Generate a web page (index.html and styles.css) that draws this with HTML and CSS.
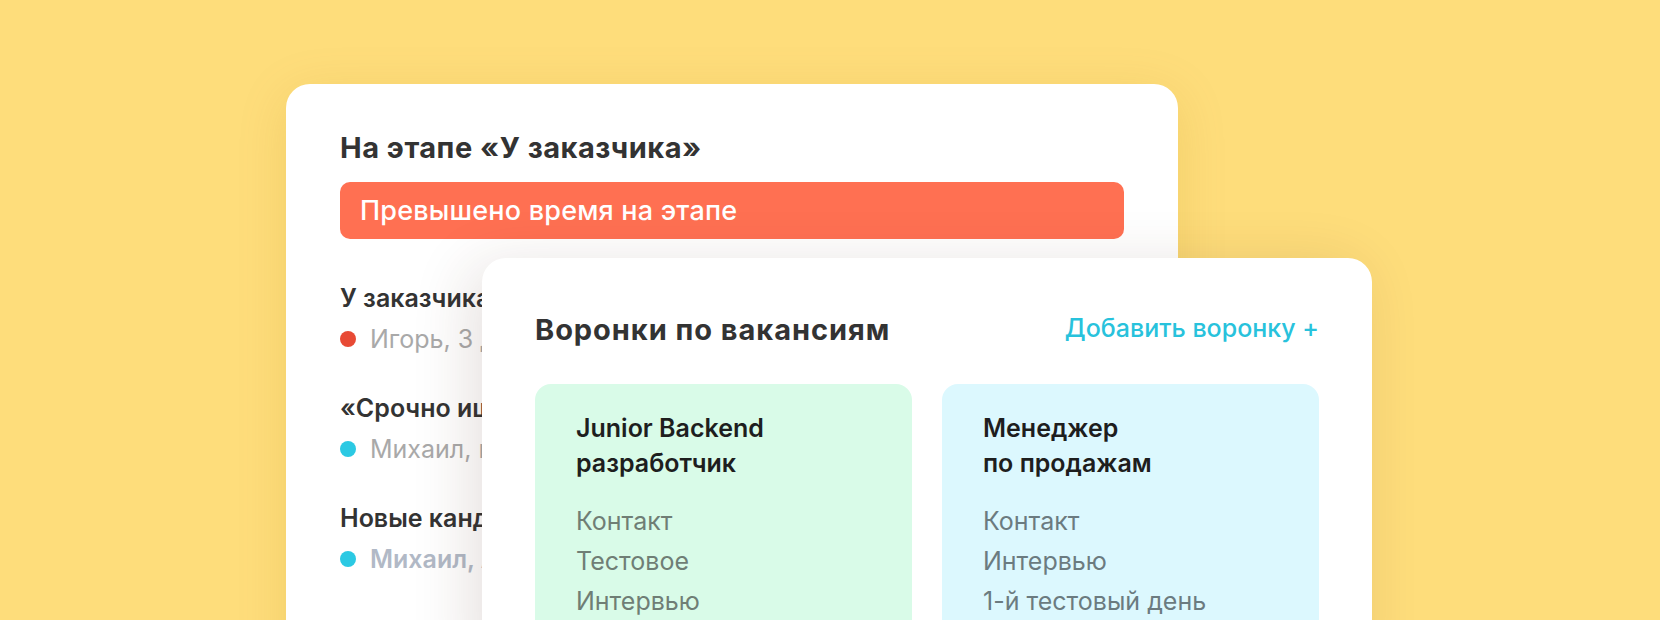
FILE: index.html
```html
<!DOCTYPE html>
<html lang="ru">
<head>
<meta charset="utf-8">
<title>Воронки</title>
<link rel="stylesheet" href="styles.css">
</head>
<body>
<div class="stage">
  <section class="card card-back">
    <h2 class="back-title">На этапе «У заказчика»</h2>
    <div class="alert">Превышено время на этапе</div>
    <ul class="events">
      <li class="event">
        <div class="event-title">У заказчика 3 дня</div>
        <div class="event-sub"><span class="dot dot-red"></span><span class="sub-text">Игорь, 3 дня на этапе</span></div>
      </li>
      <li class="event">
        <div class="event-title">«Срочно ищем аналитика»</div>
        <div class="event-sub"><span class="dot dot-cyan"></span><span class="sub-text">Михаил, новое сообщение</span></div>
      </li>
      <li class="event">
        <div class="event-title">Новые кандидаты</div>
        <div class="event-sub"><span class="dot dot-cyan"></span><span class="sub-text sub-strong">Михаил, Анна</span></div>
      </li>
    </ul>
  </section>
  <section class="card card-front">
    <div class="front-head">
      <h2 class="front-title">Воронки по вакансиям</h2>
      <a class="add-link" href="#">Добавить воронку +</a>
    </div>
    <div class="funnels">
      <div class="funnel funnel-green">
        <div class="funnel-name">Junior Backend<br>разработчик</div>
        <ul class="stages">
          <li>Контакт</li>
          <li>Тестовое</li>
          <li>Интервью</li>
        </ul>
      </div>
      <div class="funnel funnel-blue">
        <div class="funnel-name">Менеджер<br>по продажам</div>
        <ul class="stages">
          <li>Контакт</li>
          <li>Интервью</li>
          <li>1-й тестовый день</li>
        </ul>
      </div>
    </div>
  </section>
</div>
</body>
</html>
```

FILE: styles.css
```css
html, body {
  margin: 0;
  padding: 0;
}
body {
  width: 1660px;
  height: 620px;
  overflow: hidden;
  background: #fedd7b;
  font-family: Inter, "Noto Sans", sans-serif;
  color: #333333;
}
.stage {
  display: grid;
  grid-template-columns: 196px 696px 194px;
  grid-template-rows: 174px 420px;
  margin-left: 286px;
  padding-top: 84px;
}
.card {
  background: #ffffff;
  border-radius: 24px;
  box-sizing: border-box;
}
.card-back {
  grid-column: 1 / 3;
  grid-row: 1 / 3;
  padding: 47px 54px 0 54px;
  box-shadow: 0 10px 50px rgba(170, 120, 0, 0.15);
  overflow: hidden;
}
.card-front {
  grid-column: 2 / 4;
  grid-row: 2 / 3;
  padding: 56px 53px 0 53px;
  box-shadow: -12px 8px 60px rgba(80, 40, 30, 0.14);
  position: relative;
  z-index: 1;
  overflow: hidden;
}
.back-title {
  margin: 0;
  font-size: 29px;
  line-height: 34px;
  font-weight: 700;
  color: #333333;
  letter-spacing: 0.5px;
}
.alert {
  margin-top: 17px;
  height: 57px;
  box-sizing: border-box;
  background: #ff7052;
  border-radius: 10px;
  color: #ffffff;
  font-size: 27px;
  font-weight: 500;
  line-height: 57px;
  padding-left: 20px;
  letter-spacing: 0.2px;
}
.events {
  list-style: none;
  margin: 43px 0 0 0;
  padding: 0;
  display: flex;
  flex-direction: column;
  gap: 37px;
}
.event {
  display: flex;
  flex-direction: column;
  gap: 9px;
  white-space: nowrap;
}
.event-title {
  font-size: 25px;
  line-height: 32px;
  font-weight: 600;
  color: #333333;
}
.event-sub {
  display: flex;
  align-items: center;
  gap: 14px;
  font-size: 25px;
  line-height: 32px;
  color: #a9a9a9;
}
.dot {
  width: 16px;
  height: 16px;
  border-radius: 50%;
  flex: none;
}
.dot-red { background: #e84a35; }
.dot-cyan { background: #2bc9e3; }
.sub-strong {
  font-weight: 600;
  color: #b1b9c6;
}
.front-head {
  display: flex;
  justify-content: space-between;
  align-items: flex-start;
}
.front-title {
  margin: 0;
  font-size: 29px;
  line-height: 32px;
  font-weight: 700;
  color: #333333;
  letter-spacing: 0.95px;
}
.add-link {
  font-size: 25px;
  line-height: 29px;
  font-weight: 500;
  color: #28c2dc;
  text-decoration: none;
}
.funnels {
  margin-top: 38px;
  display: grid;
  grid-template-columns: 1fr 1fr;
  gap: 30px;
}
.funnel {
  border-radius: 16px;
  padding: 27px 40px 0 41px;
  height: 300px;
  box-sizing: border-box;
}
.funnel-green { background: #d9fbe8; }
.funnel-blue { background: #dcf8fe; }
.funnel-name {
  font-size: 25px;
  line-height: 35px;
  font-weight: 600;
  color: #1e1e1e;
}
.stages {
  list-style: none;
  margin: 20px 0 0 0;
  padding: 0;
  font-size: 25px;
  line-height: 40px;
  font-weight: 400;
}
.funnel-green .stages { color: #6f7e75; }
.funnel-blue .stages { color: #6b7b80; }
```
